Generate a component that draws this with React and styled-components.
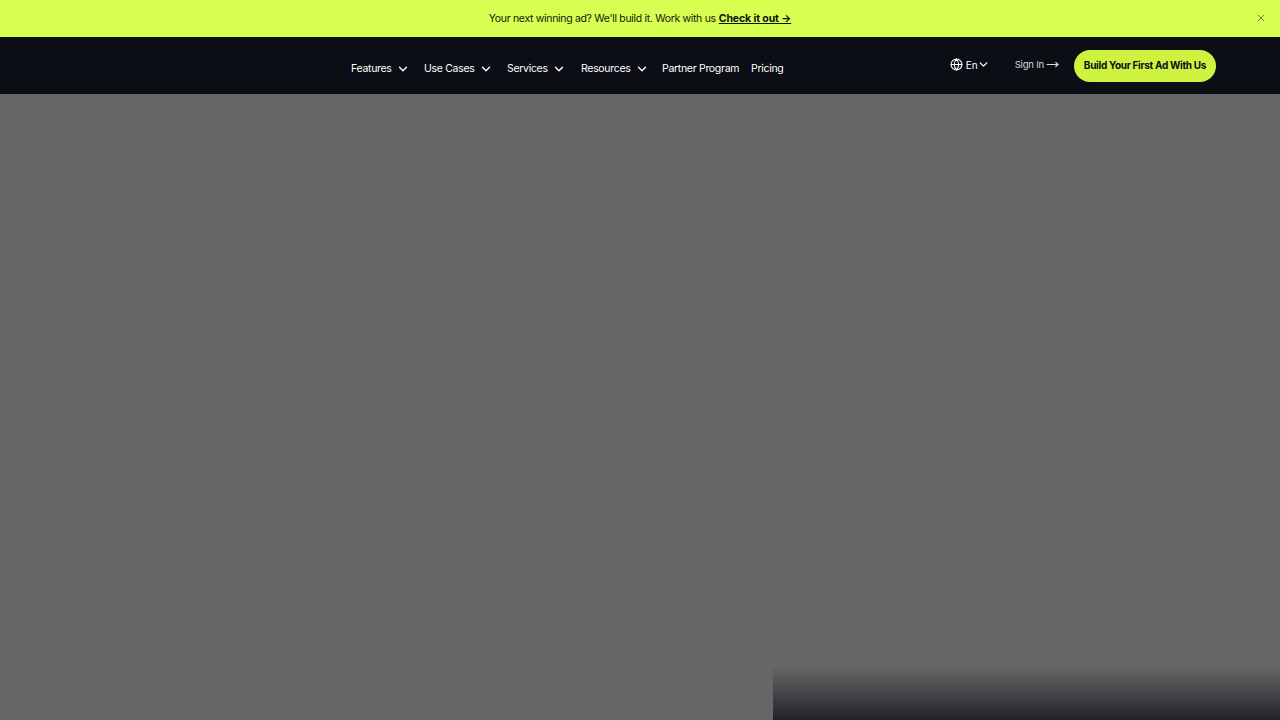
import styled, { createGlobalStyle } from "styled-components";
import { ChevronDown, Globe, MoveRight, X } from "lucide-react";

const GlobalStyle = createGlobalStyle`
  html, body {
    margin: 0;
    height: 100%;
    background: #666666;
    font-family: "Inter", "Liberation Sans", sans-serif;
  }
  #root {
    height: 100%;
  }
`;

const Page = styled.div`
  display: flex;
  flex-direction: column;
  height: 720px;
  overflow: hidden;
`;

const Banner = styled.div`
  position: relative;
  display: flex;
  justify-content: center;
  align-items: center;
  height: 37px;
  background: #d6ff52;
  color: #15180d;
  font-size: 10.5px;
  letter-spacing: -0.32px;
`;

const BannerLink = styled.a`
  margin-left: 3px;
  font-weight: 700;
  letter-spacing: -0.1px;
  text-decoration: underline;
  color: #101208;
`;

const CloseButton = styled.button`
  position: absolute;
  top: 12px;
  right: 13px;
  display: flex;
  padding: 0;
  border: 0;
  background: none;
  color: #4c5a22;
`;

const Nav = styled.nav`
  display: flex;
  align-items: center;
  height: 57px;
  padding: 0 64px 0 351px;
  background: #0b0e14;
  color: #ffffff;
`;

const Menu = styled.ul`
  display: flex;
  align-items: center;
  margin: 6px 0 0;
  padding: 0;
  list-style: none;
  font-size: 10.5px;
  letter-spacing: -0.3px;
`;

const MenuItem = styled.li`
  display: flex;
  align-items: center;
  gap: 4px;
  width: ${(p) => p.$width}px;
  white-space: nowrap;
`;

const Actions = styled.div`
  display: flex;
  align-items: center;
  margin-left: auto;
`;

const Language = styled.div`
  display: flex;
  align-items: center;
  gap: 3px;
  margin: 0 25px 2px 0;
  font-size: 10px;
`;

const LanguageChevron = styled(ChevronDown)`
  margin-left: -4px;
`;

const SignIn = styled.a`
  display: flex;
  align-items: center;
  gap: 2px;
  margin: 0 15px 2px 0;
  font-size: 9.5px;
  letter-spacing: -0.2px;
  color: #d8dadc;
`;

const Cta = styled.button`
  width: 142px;
  height: 32px;
  padding: 0 0 2px;
  border: 0;
  border-radius: 16px;
  background: #cdf23f;
  color: #0b0e14;
  font-family: inherit;
  font-size: 10px;
  font-weight: 700;
  letter-spacing: -0.3px;
  white-space: nowrap;
`;

const Main = styled.main`
  flex: 1;
  display: flex;
  justify-content: flex-end;
  align-items: flex-end;
  background: #666666;
`;

const Fade = styled.div`
  width: 507px;
  height: 54px;
  background: linear-gradient(to bottom, #666666, #24232b);
`;

const items = [
  { label: "Features", width: 73 },
  { label: "Use Cases", width: 83 },
  { label: "Services", width: 74 },
  { label: "Resources", width: 81 },
];

export default function App() {
  return (
    <Page>
      <GlobalStyle />
      <Banner>
        Your next winning ad? We'll build it. Work with us
        <BannerLink>Check it out →</BannerLink>
        <CloseButton>
          <X size={12} strokeWidth={1.5} />
        </CloseButton>
      </Banner>
      <Nav>
        <Menu>
          {items.map((item) => (
            <MenuItem key={item.label} $width={item.width}>
              {item.label}
              <ChevronDown size={14} strokeWidth={2.4} />
            </MenuItem>
          ))}
          <MenuItem $width={89}>Partner Program</MenuItem>
          <MenuItem $width={32}>Pricing</MenuItem>
        </Menu>
        <Actions>
          <Language>
            <Globe size={13} />
            En
            <LanguageChevron size={13} strokeWidth={2.4} />
          </Language>
          <SignIn>
            Sign In
            <MoveRight size={13} strokeWidth={2.2} />
          </SignIn>
          <Cta>Build Your First Ad With Us</Cta>
        </Actions>
      </Nav>
      <Main>
        <Fade />
      </Main>
    </Page>
  );
}
